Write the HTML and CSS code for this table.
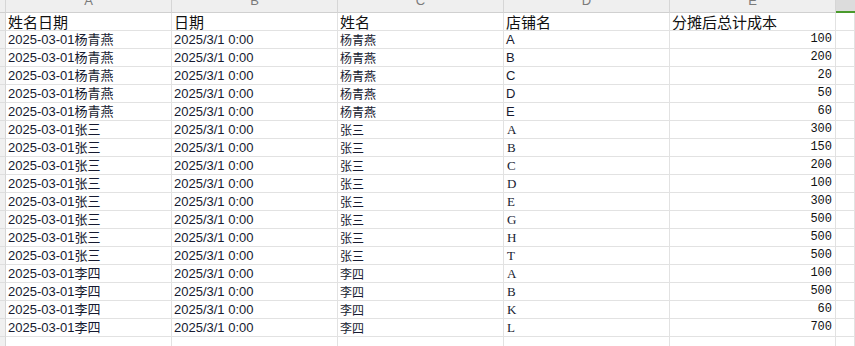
FILE: index.html
```html
<!DOCTYPE html>
<html lang="zh">
<head>
<meta charset="utf-8">
<title>Sheet</title>
<link rel="stylesheet" href="styles.css">
</head>
<body>
<div class="sheet">
  <div class="ch corner"></div>
  <div class="ch"><span>A</span></div>
  <div class="ch"><span>B</span></div>
  <div class="ch"><span>C</span></div>
  <div class="ch"><span>D</span></div>
  <div class="ch"><span>E</span></div>
  <div class="ch sel"></div>

  <div class="rh"></div>
  <div class="c head">姓名日期</div>
  <div class="c head">日期</div>
  <div class="c head">姓名</div>
  <div class="c head">店铺名</div>
  <div class="c head">分摊后总计成本</div>
  <div class="c"></div>

  <div class="rh"></div><div class="c">2025-03-01杨青燕</div><div class="c">2025/3/1 0:00</div><div class="c cjk">杨青燕</div><div class="c">A</div><div class="c num">100</div><div class="c"></div>
  <div class="rh"></div><div class="c">2025-03-01杨青燕</div><div class="c">2025/3/1 0:00</div><div class="c cjk">杨青燕</div><div class="c">B</div><div class="c num">200</div><div class="c"></div>
  <div class="rh"></div><div class="c">2025-03-01杨青燕</div><div class="c">2025/3/1 0:00</div><div class="c cjk">杨青燕</div><div class="c">C</div><div class="c num">20</div><div class="c"></div>
  <div class="rh"></div><div class="c">2025-03-01杨青燕</div><div class="c">2025/3/1 0:00</div><div class="c cjk">杨青燕</div><div class="c">D</div><div class="c num">50</div><div class="c"></div>
  <div class="rh"></div><div class="c">2025-03-01杨青燕</div><div class="c">2025/3/1 0:00</div><div class="c cjk">杨青燕</div><div class="c">E</div><div class="c num">60</div><div class="c"></div>
  <div class="rh"></div><div class="c">2025-03-01张三</div><div class="c">2025/3/1 0:00</div><div class="c cjk">张三</div><div class="c ser">A</div><div class="c num">300</div><div class="c"></div>
  <div class="rh"></div><div class="c">2025-03-01张三</div><div class="c">2025/3/1 0:00</div><div class="c cjk">张三</div><div class="c ser">B</div><div class="c num">150</div><div class="c"></div>
  <div class="rh"></div><div class="c">2025-03-01张三</div><div class="c">2025/3/1 0:00</div><div class="c cjk">张三</div><div class="c ser">C</div><div class="c num">200</div><div class="c"></div>
  <div class="rh"></div><div class="c">2025-03-01张三</div><div class="c">2025/3/1 0:00</div><div class="c cjk">张三</div><div class="c ser">D</div><div class="c num">100</div><div class="c"></div>
  <div class="rh"></div><div class="c">2025-03-01张三</div><div class="c">2025/3/1 0:00</div><div class="c cjk">张三</div><div class="c ser">E</div><div class="c num">300</div><div class="c"></div>
  <div class="rh"></div><div class="c">2025-03-01张三</div><div class="c">2025/3/1 0:00</div><div class="c cjk">张三</div><div class="c ser">G</div><div class="c num">500</div><div class="c"></div>
  <div class="rh"></div><div class="c">2025-03-01张三</div><div class="c">2025/3/1 0:00</div><div class="c cjk">张三</div><div class="c ser">H</div><div class="c num">500</div><div class="c"></div>
  <div class="rh"></div><div class="c">2025-03-01张三</div><div class="c">2025/3/1 0:00</div><div class="c cjk">张三</div><div class="c ser">T</div><div class="c num">500</div><div class="c"></div>
  <div class="rh"></div><div class="c">2025-03-01李四</div><div class="c">2025/3/1 0:00</div><div class="c cjk">李四</div><div class="c ser">A</div><div class="c num">100</div><div class="c"></div>
  <div class="rh"></div><div class="c">2025-03-01李四</div><div class="c">2025/3/1 0:00</div><div class="c cjk">李四</div><div class="c ser">B</div><div class="c num">500</div><div class="c"></div>
  <div class="rh"></div><div class="c">2025-03-01李四</div><div class="c">2025/3/1 0:00</div><div class="c cjk">李四</div><div class="c ser">K</div><div class="c num">60</div><div class="c"></div>
  <div class="rh"></div><div class="c">2025-03-01李四</div><div class="c">2025/3/1 0:00</div><div class="c cjk">李四</div><div class="c ser">L</div><div class="c num">700</div><div class="c"></div>

  <div class="rh"></div><div class="c"></div><div class="c"></div><div class="c"></div><div class="c"></div><div class="c"></div><div class="c"></div>
</div>
</body>
</html>
```

FILE: styles.css
```css
html, body {
  margin: 0;
  padding: 0;
  background: #ffffff;
  overflow: hidden;
}

.sheet {
  display: grid;
  grid-template-columns: 6px repeat(5, 166px) 1fr;
  grid-template-rows: 13px repeat(19, 18px);
  width: 855px;
  height: 346px;
  overflow: hidden;
  font-family: "Liberation Sans", "Noto Sans CJK SC", sans-serif;
  font-size: 13px;
  color: #161a30;
}

.ch {
  box-sizing: border-box;
  background: #efefef;
  border-right: 1px solid #d6d6d6;
  border-bottom: 1px solid #d0d0d0;
  overflow: hidden;
  text-align: center;
  color: #7a7a7a;
  font-size: 13px;
}

.ch span {
  display: block;
  line-height: 12px;
  margin-top: -5px;
}

.ch.corner {
  border-right: 1px solid #d6d6d6;
}

.ch.sel {
  background: #dcdcdc;
  border-bottom: 2px solid #4a9a2c;
  border-right: none;
}

.rh {
  box-sizing: border-box;
  background: #f0f0f0;
  border-right: 1px solid #d6d6d6;
  border-bottom: 1px solid #dedede;
}

.c {
  box-sizing: border-box;
  border-right: 1px solid #e2e2e2;
  border-bottom: 1px solid #e2e2e2;
  padding: 0 3px 0 2px;
  line-height: 17px;
  white-space: nowrap;
  overflow: hidden;
}

.c.head {
  font-family: "Noto Sans CJK SC", sans-serif;
  font-size: 15px;
  line-height: 18px;
  color: #111111;
}

.c.cjk {
  font-family: "Noto Sans CJK SC", sans-serif;
  font-size: 12px;
}

.c.ser {
  font-family: "Liberation Serif", serif;
  font-size: 13px;
  padding-left: 3px;
}

.c.num {
  font-family: "Liberation Mono", monospace;
  font-size: 12px;
  text-align: right;
  padding-right: 3px;
  color: #111111;
}
```
